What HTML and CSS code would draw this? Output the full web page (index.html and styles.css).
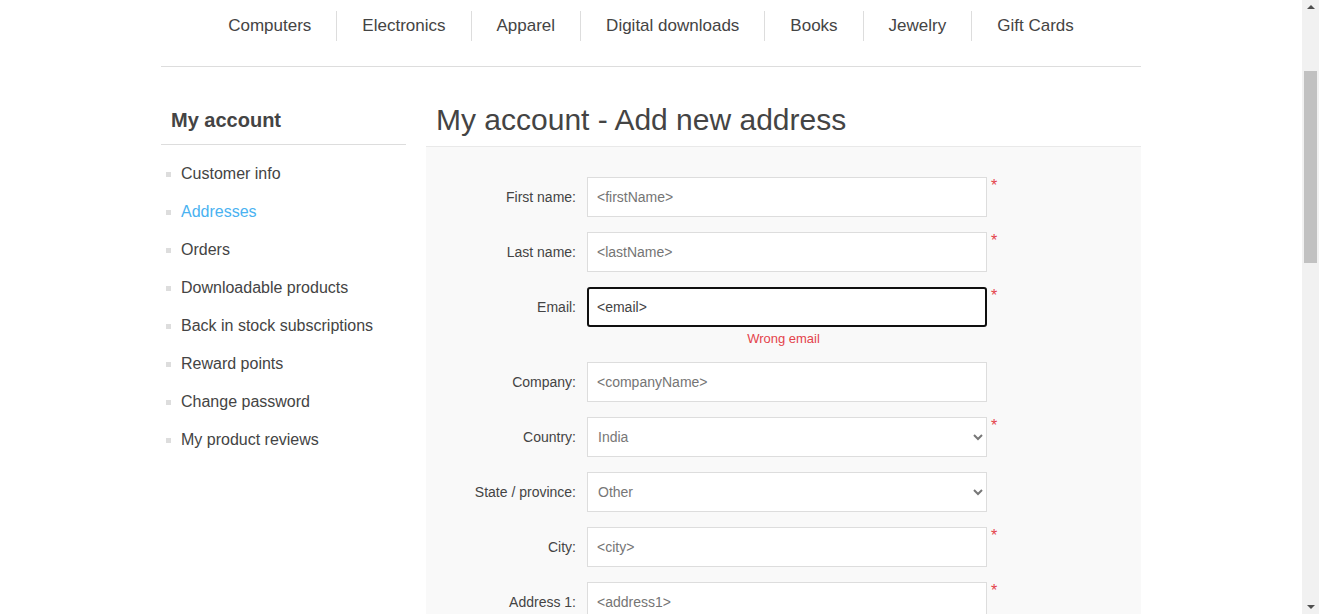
FILE: index.html
```html
<!DOCTYPE html>
<html lang="en">
<head>
<meta charset="utf-8">
<title>My account - Add new address</title>
<link rel="stylesheet" href="styles.css">
</head>
<body>
<div class="page">
  <div class="master">
    <nav class="header-menu">
      <ul class="top-menu">
        <li><a href="#">Computers</a></li>
        <li><a href="#">Electronics</a></li>
        <li><a href="#">Apparel</a></li>
        <li><a href="#">Digital downloads</a></li>
        <li><a href="#">Books</a></li>
        <li><a href="#">Jewelry</a></li>
        <li><a href="#">Gift Cards</a></li>
      </ul>
    </nav>
    <div class="columns">
      <aside class="side">
        <div class="block-title">My account</div>
        <ul class="side-list">
          <li><a href="#">Customer info</a></li>
          <li class="active"><a href="#">Addresses</a></li>
          <li><a href="#">Orders</a></li>
          <li><a href="#">Downloadable products</a></li>
          <li><a href="#">Back in stock subscriptions</a></li>
          <li><a href="#">Reward points</a></li>
          <li><a href="#">Change password</a></li>
          <li><a href="#">My product reviews</a></li>
        </ul>
      </aside>
      <main class="center">
        <h1 class="page-title">My account - Add new address</h1>
        <form class="form-fields">
          <div class="row">
            <label class="lbl" for="fn">First name:</label>
            <input class="field" id="fn" type="text" placeholder="&lt;firstName&gt;">
            <span class="req">*</span>
          </div>
          <div class="row">
            <label class="lbl" for="ln">Last name:</label>
            <input class="field" id="ln" type="text" placeholder="&lt;lastName&gt;">
            <span class="req">*</span>
          </div>
          <div class="row has-error">
            <label class="lbl" for="em">Email:</label>
            <input class="field focused" id="em" type="text" value="&lt;email&gt;">
            <span class="req">*</span>
          </div>
          <div class="error">Wrong email</div>
          <div class="row">
            <label class="lbl" for="co">Company:</label>
            <input class="field" id="co" type="text" placeholder="&lt;companyName&gt;">
            <span class="req hidden">*</span>
          </div>
          <div class="row">
            <label class="lbl" for="ct">Country:</label>
            <select class="field sel" id="ct"><option>India</option></select>
            <span class="req">*</span>
          </div>
          <div class="row">
            <label class="lbl" for="st">State / province:</label>
            <select class="field sel" id="st"><option>Other</option></select>
            <span class="req hidden">*</span>
          </div>
          <div class="row">
            <label class="lbl" for="ci">City:</label>
            <input class="field" id="ci" type="text" placeholder="&lt;city&gt;">
            <span class="req">*</span>
          </div>
          <div class="row last">
            <label class="lbl" for="a1">Address 1:</label>
            <input class="field" id="a1" type="text" placeholder="&lt;address1&gt;">
            <span class="req">*</span>
          </div>
        </form>
      </main>
    </div>
  </div>
</div>
<div class="scrollbar" aria-hidden="true">
  <div class="sb-arrow sb-up"></div>
  <div class="sb-track"><div class="sb-thumb"></div></div>
  <div class="sb-arrow sb-down"></div>
</div>
</body>
</html>
```
FILE: styles.css
```css
html, body {
  margin: 0;
  padding: 0;
  height: 614px;
  overflow: hidden;
  background: #fff;
  font-family: "Liberation Sans", Arial, sans-serif;
  color: #444;
}

.page {
  width: 1302px;
}

.master {
  width: 980px;
  margin: 0 auto;
}

/* top menu */
.header-menu {
  padding-top: 11px;
  padding-bottom: 25px;
  border-bottom: 1px solid #ddd;
}

.top-menu {
  list-style: none;
  margin: 0;
  padding: 0;
  display: flex;
  justify-content: center;
}

.top-menu li {
  height: 30px;
  line-height: 29px;
  border-left: 1px solid #ddd;
}

.top-menu li:first-child {
  border-left: none;
}

.top-menu a {
  display: block;
  padding: 0 25px;
  font-size: 17px;
  color: #444;
  text-decoration: none;
}

/* columns */
.columns {
  display: flex;
  gap: 20px;
  margin-top: 30px;
}

.side {
  width: 245px;
  flex: none;
}

.block-title {
  height: 47px;
  line-height: 47px;
  padding: 0 10px;
  font-size: 20px;
  font-weight: bold;
  color: #444;
  border-bottom: 1px solid #ddd;
}

.side-list {
  list-style: none;
  margin: 0;
  padding: 10px 0 0 0;
}

.side-list li {
  display: flex;
  align-items: center;
  height: 38px;
}

.side-list li::before {
  content: "";
  width: 5px;
  height: 5px;
  margin: 1px 10px 0 5px;
  background: #ddd;
  flex: none;
}

.side-list a {
  font-size: 16px;
  color: #444;
  text-decoration: none;
}

.side-list li.active a {
  color: #4ab2f1;
}

.center {
  width: 715px;
  flex: none;
}

.page-title {
  margin: 0;
  padding: 0 10px 3px;
  height: 46px;
  line-height: 46px;
  font-size: 30px;
  font-weight: normal;
  color: #444;
  border-bottom: 1px solid #e9e9e9;
}

.form-fields {
  background: #f9f9f9;
  padding: 30px 0 0;
}

.row {
  display: flex;
  align-items: flex-start;
  margin-bottom: 15px;
}

.row.has-error,
.row.last {
  margin-bottom: 0;
}

.lbl {
  width: 150px;
  flex: none;
  margin-right: 11px;
  text-align: right;
  font-size: 14px;
  line-height: 40px;
  color: #444;
}

.field {
  box-sizing: border-box;
  width: 400px;
  height: 40px;
  flex: none;
  margin: 0;
  border: 1px solid #ddd;
  border-radius: 0;
  background: #fff;
  padding: 0 9px;
  font-family: "Liberation Sans", Arial, sans-serif;
  font-size: 14px;
  color: #777;
  outline: none;
}

.field::placeholder {
  color: #757575;
}

.field.focused {
  border: 2px solid #101010;
  border-radius: 3px;
  padding: 0 8px;
  color: #444;
}

.sel {
  padding: 0 6px;
  color: #777;
}

.req {
  margin: 1px 0 0 4px;
  font-size: 16px;
  line-height: 16px;
  color: #e4434b;
}

.req.hidden {
  visibility: hidden;
}

.error {
  margin-top: 4px;
  margin-bottom: 15px;
  height: 16px;
  line-height: 16px;
  text-align: center;
  font-size: 13px;
  color: #e4434b;
}

/* fake window scrollbar */
.scrollbar {
  position: fixed;
  top: 0;
  right: 0;
  width: 17px;
  height: 614px;
  background: #f1f1f1;
  display: flex;
  flex-direction: column;
}

.sb-arrow {
  height: 17px;
  flex: none;
  display: flex;
  justify-content: center;
  align-items: center;
}

.sb-up::before {
  content: "";
  border-left: 4px solid transparent;
  border-right: 4px solid transparent;
  border-bottom: 4px solid #505050;
  margin-top: -3px;
}

.sb-down::before {
  content: "";
  border-left: 4px solid transparent;
  border-right: 4px solid transparent;
  border-top: 4px solid #505050;
  margin-top: 3px;
}

.sb-track {
  flex: 1;
  padding: 0 2px;
}

.sb-thumb {
  margin-top: 54px;
  height: 192px;
  background: #c1c1c1;
}
```
